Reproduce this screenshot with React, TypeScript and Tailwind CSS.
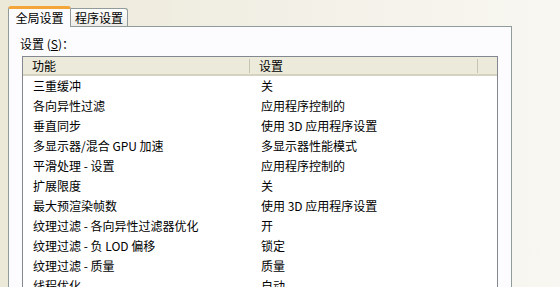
const rows: [string, string][] = [
  ["三重缓冲", "关"],
  ["各向异性过滤", "应用程序控制的"],
  ["垂直同步", "使用 3D 应用程序设置"],
  ["多显示器/混合 GPU 加速", "多显示器性能模式"],
  ["平滑处理 - 设置", "应用程序控制的"],
  ["扩展限度", "关"],
  ["最大预渲染帧数", "使用 3D 应用程序设置"],
  ["纹理过滤 - 各向异性过滤器优化", "开"],
  ["纹理过滤 - 负 LOD 偏移", "锁定"],
  ["纹理过滤 - 质量", "质量"],
  ["线程优化", "自动"],
];

const font = { fontFamily: '"Noto Sans CJK SC", "DejaVu Sans", sans-serif' };

export default function App() {
  return (
    <div
      className="w-[560px] h-[287px] overflow-hidden bg-gradient-to-r from-[#ECE9D8] via-[#F2F0E6] to-[#F8F7F1] text-[12px] leading-none text-black"
      style={font}
    >
      <div className="flex items-end pl-2 pt-[5px] h-[26px]">
        <div className="relative z-10 h-[21px] w-[63px] -mb-px bg-[#FCFCFE] border border-b-0 border-[#919B9C] rounded-t-[3px] border-t-[3px] border-t-[#F3A53A] flex items-center justify-center">
          全局设置
        </div>
        <div className="h-[18px] w-[57px] bg-gradient-to-b from-white to-[#ECEBE6] border border-b-0 border-l-0 border-[#919B9C] rounded-tr-[3px] flex items-center justify-center">
          程序设置
        </div>
      </div>
      <div className="w-[504px] h-[270px] ml-2 bg-[#FCFCFE] border border-[#919B9C] pt-[11px]">
        <div className="pl-[11px] h-[18px]">
          设置 (<span className="underline">S</span>)：
        </div>
        <div className="ml-[13px] w-[476px] h-[240px] bg-white border border-[#828790]">
          <div className="flex h-[19px] bg-[#EBEADB] border-b-2 border-[#D6D2C2] items-center">
            <div className="w-[227px] pl-[9px] border-r border-[#C7C5B2] h-[14px] flex items-center">功能</div>
            <div className="w-[228px] pl-[9px] border-r border-[#C7C5B2] h-[14px] flex items-center">设置</div>
            <div className="flex-1" />
          </div>
          <div className="flex flex-col">
            {rows.map(([a, b]) => (
              <div key={a} className="flex h-[20px] items-center">
                <div className="w-[228px] pl-[10px]">{a}</div>
                <div className="pl-[10px]">{b}</div>
              </div>
            ))}
          </div>
        </div>
      </div>
    </div>
  );
}
